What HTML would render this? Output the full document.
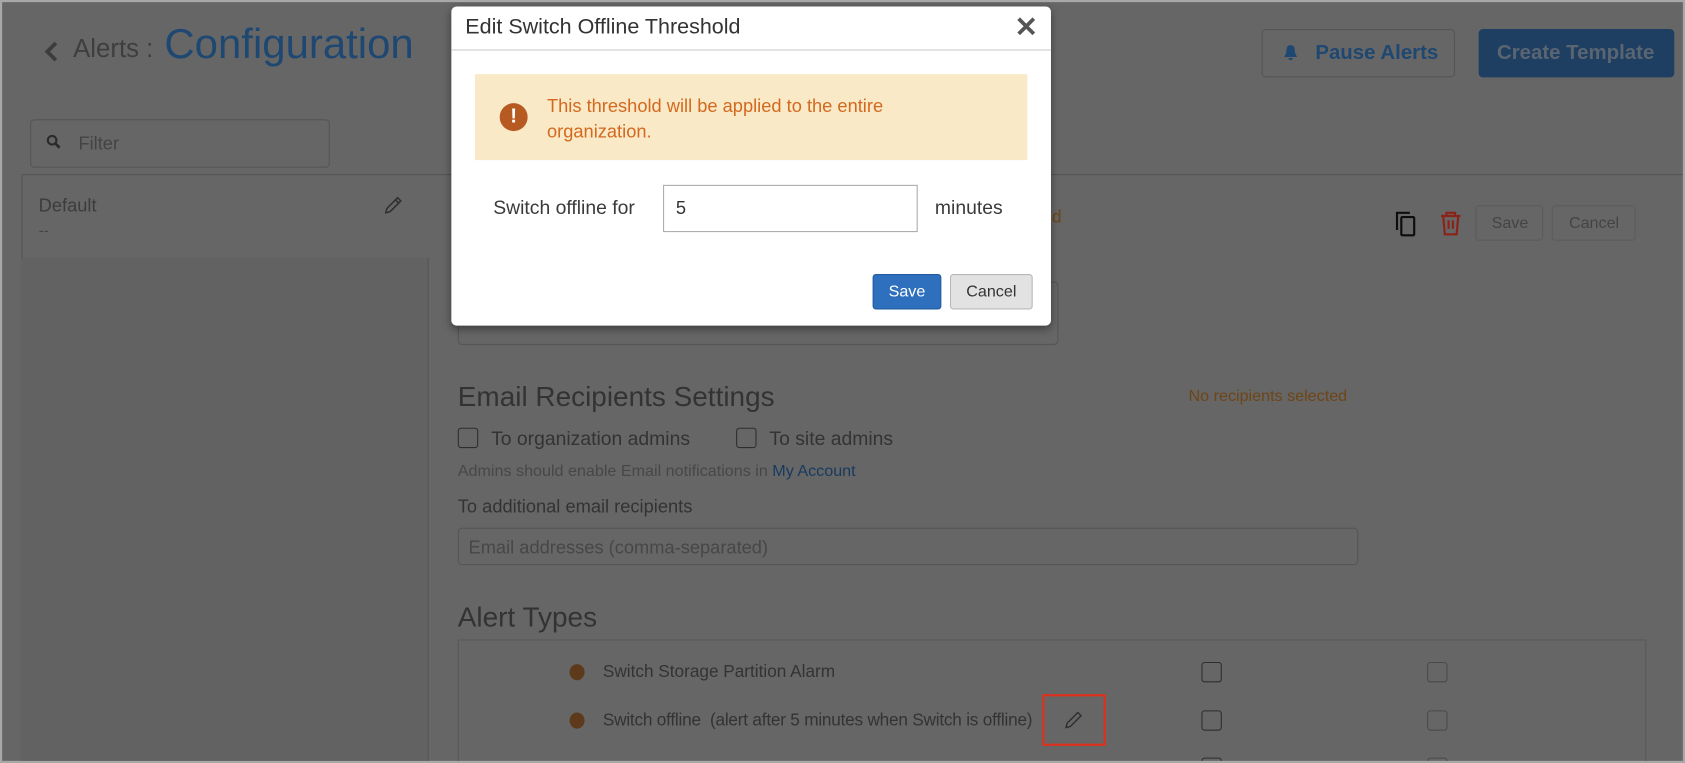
<!DOCTYPE html>
<html><head><style>
html,body{margin:0;padding:0;width:1685px;height:763px;overflow:hidden;background:#a8a8a8;}
#w{position:absolute;left:0;top:0;width:1568px;height:710px;transform:scale(1.07462);transform-origin:0 0;font-family:"Liberation Sans",sans-serif;overflow:hidden;}
#pg{position:absolute;left:2px;top:2px;width:1564px;height:706px;background:#666;overflow:hidden;}
.a{position:absolute;white-space:nowrap;}
.bx{position:absolute;box-sizing:border-box;border:1px solid #555;}
.cb{position:absolute;width:19px;height:19px;box-sizing:border-box;border:1.5px solid #2e2e2e;border-radius:3px;}
.cb2{position:absolute;width:19px;height:19px;box-sizing:border-box;border:1.5px solid #4a4a4a;border-radius:3px;}
</style></head><body><div id="w"><div id="pg">
<svg class="a" style="left:38px;top:35px" width="16" height="22"><path d="M12 3 L4 11 L12 19" stroke="#3c3c3c" stroke-width="3.5" fill="none"/></svg>
<div class="a" style="left:66px;top:30px;font-size:24px;color:#3e3e3e">Alerts :</div>
<div class="a" style="left:151px;top:18px;font-size:39px;color:#1e4872">Configuration</div>
<div class="bx" style="left:1172px;top:25px;width:180px;height:45px;border-radius:4px;"></div>
<svg class="a" style="left:1192px;top:39px" width="14" height="16"><path d="M7 1 C3 1 3 5 3 8 L1 12 L13 12 L11 8 C11 5 11 1 7 1 Z M5 13 A2 2 0 0 0 9 13Z" fill="#1e4872"/></svg>
<div class="a" style="left:1222px;top:37px;font-size:19px;font-weight:bold;color:#1e4872">Pause Alerts</div>
<div class="a" style="left:1374px;top:25px;width:182px;height:45px;background:#1f3f62;border-radius:4px;"></div>
<div class="a" style="left:1391px;top:37px;font-size:19px;font-weight:bold;color:#5a6572">Create Template</div>
<div class="bx" style="left:26px;top:109px;width:279px;height:45px;border-radius:4px;"></div>
<svg class="a" style="left:41px;top:123px" width="14" height="14"><circle cx="5.5" cy="5.5" r="4" stroke="#2b2b2b" stroke-width="2" fill="none"/><path d="M8.5 8.5 L12.5 12.5" stroke="#2b2b2b" stroke-width="2.5"/></svg>
<div class="a" style="left:71px;top:122px;font-size:17px;color:#444">Filter</div>
<div class="a" style="left:18px;top:160px;width:1546px;height:546px;border-top:1px solid #555;border-left:1px solid #555;"></div>
<div class="a" style="left:18px;top:160px;width:378px;height:78px;border-bottom:1px solid #555;"></div>
<div class="a" style="left:18px;top:238px;width:378px;height:468px;border-right:1px solid #555;background:#626262"></div>
<div class="a" style="left:34px;top:180px;font-size:17px;color:#3c3c3c">Default</div>
<div class="a" style="left:34px;top:204px;font-size:14px;color:#444">--</div>
<svg class="a" style="left:354px;top:179px" width="20" height="20"><path d="M3 17 L4 13 L14 3 L17 6 L7 16 Z M12 5 L15 8" stroke="#2e2e2e" stroke-width="1.4" fill="none"/></svg>
<svg class="a" style="left:1296px;top:194px" width="22" height="26"><path d="M2 18 V2 H14" stroke="#0d0d0d" stroke-width="2" fill="none"/><rect x="6" y="6" width="12" height="17" rx="1" stroke="#0d0d0d" stroke-width="2" fill="none"/></svg>
<svg class="a" style="left:1337px;top:194px" width="22" height="24"><path d="M2 5 H20 M7 5 V2 H15 V5 M4 5 L5.5 22 H16.5 L18 5 M9 9 V17 M13 9 V17" stroke="#8a2218" stroke-width="2" fill="none"/></svg>
<div class="bx" style="left:1371px;top:189px;width:63px;height:33px;border-radius:3px;border-color:#5c5c5c"></div>
<div class="a" style="left:1386px;top:197px;font-size:15px;color:#444">Save</div>
<div class="bx" style="left:1442px;top:189px;width:78px;height:33px;border-radius:3px;border-color:#5c5c5c"></div>
<div class="a" style="left:1458px;top:197px;font-size:15px;color:#444">Cancel</div>
<div class="a" style="left:977px;top:192px;font-size:16px;color:#6e4516">d</div>
<div class="bx" style="left:424px;top:260px;width:559px;height:59px;border-radius:4px;"></div>
<div class="a" style="left:424px;top:352px;font-size:26px;color:#333">Email Recipients Settings</div>
<div class="a" style="left:1104px;top:358px;font-size:15px;color:#6e4516">No recipients selected</div>
<div class="cb" style="left:424px;top:396px"></div>
<div class="a" style="left:455px;top:396px;font-size:18px;color:#333">To organization admins</div>
<div class="cb" style="left:683px;top:396px"></div>
<div class="a" style="left:714px;top:396px;font-size:18px;color:#333">To site admins</div>
<div class="a" style="left:424px;top:428px;font-size:15px;color:#474747">Admins should enable Email notifications in <span style="color:#173a5e">My Account</span></div>
<div class="a" style="left:424px;top:460px;font-size:17px;color:#333">To additional email recipients</div>
<div class="bx" style="left:424px;top:489px;width:838px;height:35px;border-radius:4px;"></div>
<div class="a" style="left:434px;top:498px;font-size:17px;color:#474747">Email addresses (comma-separated)</div>
<div class="a" style="left:424px;top:557px;font-size:26px;color:#333">Alert Types</div>
<div class="a" style="left:424px;top:593px;width:1104px;height:200px;border:1px solid #585858;"></div>
<div class="a" style="left:528px;top:616px;width:14px;height:15px;border-radius:50%;background:#5e3a1c"></div>
<div class="a" style="left:559px;top:615px;font-size:16px;color:#333">Switch Storage Partition Alarm</div>
<div class="cb" style="left:1116px;top:614px"></div><div class="cb2" style="left:1326px;top:614px"></div>
<div class="a" style="left:528px;top:661px;width:14px;height:15px;border-radius:50%;background:#5e3a1c"></div>
<div class="a" style="left:559px;top:660px;font-size:16px;color:#333;letter-spacing:-0.2px">Switch offline&nbsp; (alert after 5 minutes when Switch is offline)</div>
<svg class="a" style="left:987px;top:658px" width="20" height="20"><path d="M3 17 L4 13 L14 3 L17 6 L7 16 Z" stroke="#2e2e2e" stroke-width="1.3" fill="none"/></svg>
<div class="a" style="left:968px;top:644px;width:59px;height:48px;box-sizing:border-box;border:2px solid #e0301a"></div>
<div class="cb" style="left:1116px;top:659px"></div><div class="cb2" style="left:1326px;top:659px"></div>
<div class="cb" style="left:1116px;top:703px"></div><div class="cb2" style="left:1326px;top:703px"></div>
<div class="a" style="left:418px;top:4px;width:558px;height:297px;background:#fff;border-radius:5px;box-shadow:0 3px 8px rgba(0,0,0,.4);">
 <div class="a" style="left:13px;top:8px;font-size:20px;color:#333">Edit Switch Offline Threshold</div>
 <div class="a" style="left:524px;top:4px;font-size:26px;font-weight:bold;color:#555">✕</div>
 <div class="a" style="left:0;top:40px;width:558px;height:1px;background:#ccc"></div>
 <div class="a" style="left:22px;top:63px;width:514px;height:80px;background:#fae9c7"></div>
 <div class="a" style="left:45px;top:90px;width:26px;height:26px;border-radius:50%;background:#b65a22;color:#fff;font-weight:bold;font-size:19px;text-align:center;line-height:26px">!</div>
 <div class="a" style="left:89px;top:81px;font-size:17px;line-height:24px;color:#d3691e">This threshold will be applied to the entire<br>organization.</div>
 <div class="a" style="left:39px;top:177px;font-size:18px;color:#3a3a3a">Switch offline for</div>
 <div class="a" style="left:197px;top:166px;width:237px;height:44px;box-sizing:border-box;border:1px solid #aaa"></div>
 <div class="a" style="left:209px;top:178px;font-size:17px;color:#333">5</div>
 <div class="a" style="left:450px;top:177px;font-size:18px;color:#3a3a3a">minutes</div>
 <div class="a" style="left:392px;top:249px;width:64px;height:33px;box-sizing:border-box;background:#2f70be;border:1px solid #225a9c;border-radius:3px;color:#fff;font-size:15px;text-align:center;line-height:31px">Save</div>
 <div class="a" style="left:464px;top:249px;width:77px;height:33px;box-sizing:border-box;background:#e2e2e2;border:1px solid #b8b8b8;border-radius:3px;color:#333;font-size:15px;text-align:center;line-height:31px">Cancel</div>
</div>
</div></div></body></html>
